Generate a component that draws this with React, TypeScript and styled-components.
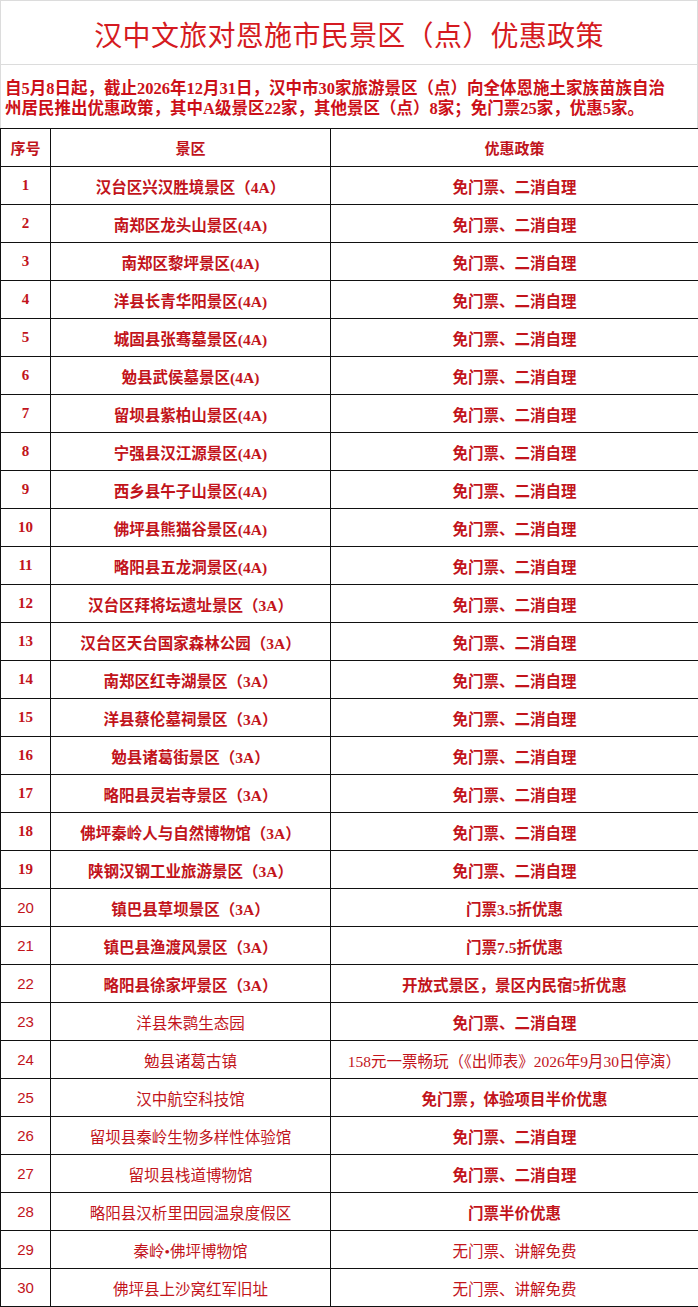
import React from 'react'
import styled, { createGlobalStyle } from 'styled-components'

const GlobalStyle = createGlobalStyle`
  html, body {
    margin: 0;
    padding: 0;
    background: #ffffff;
  }
  body {
    font-family: "Liberation Serif", "Noto Sans CJK SC", serif;
  }
`

const Page = styled.div`
  width: 698px;
  background: #fff;
`

const TitleBox = styled.div`
  height: 64px;
  border: 1px solid #dcdcdc;
  border-bottom: none;
  display: flex;
  align-items: center;
  justify-content: center;
  box-sizing: border-box;
`

const Title = styled.h1`
  margin: 0;
  font-size: 28px;
  font-weight: 400;
  color: #d51a21;
  letter-spacing: 0.3px;
  padding-top: 2px;
`

const Intro = styled.div`
  height: 64px;
  border: 1px solid #dcdcdc;
  border-bottom: none;
  box-sizing: border-box;
  padding: 14px 0 0 4px;
  font-size: 16.5px;
  line-height: 20px;
  font-weight: 700;
  color: #cc1018;
  white-space: nowrap;
`

const Table = styled.table`
  width: 698px;
  border-collapse: collapse;
  table-layout: fixed;
`

const Col = styled.col<{ w: number }>`
  width: ${(p) => p.w}px;
`

const Cell = styled.td<{ light?: boolean; num?: boolean }>`
  height: 37px;
  padding: 0;
  border: 1px solid #111;
  text-align: center;
  vertical-align: middle;
  color: #c2141b;
  font-size: ${(p) => (p.num ? '15px' : '15.5px')};
  font-weight: ${(p) => (p.light ? 400 : 700)};
  font-family: ${(p) =>
    p.num && p.light
      ? '"Liberation Sans", "Noto Sans CJK SC", sans-serif'
      : '"Liberation Serif", "Noto Sans CJK SC", serif'};
  white-space: nowrap;
`

const HeadCell = styled(Cell).attrs({ as: 'th' })`
  font-weight: 700;
  font-size: 15px;
  color: #c0141c;
`

type Row = { name: string; policy: string; light?: boolean; policyLight?: boolean }

const rows: Row[] = [
  { name: '汉台区兴汉胜境景区（4A）', policy: '免门票、二消自理' },
  { name: '南郑区龙头山景区(4A)', policy: '免门票、二消自理' },
  { name: '南郑区黎坪景区(4A)', policy: '免门票、二消自理' },
  { name: '洋县长青华阳景区(4A)', policy: '免门票、二消自理' },
  { name: '城固县张骞墓景区(4A)', policy: '免门票、二消自理' },
  { name: '勉县武侯墓景区(4A)', policy: '免门票、二消自理' },
  { name: '留坝县紫柏山景区(4A)', policy: '免门票、二消自理' },
  { name: '宁强县汉江源景区(4A)', policy: '免门票、二消自理' },
  { name: '西乡县午子山景区(4A)', policy: '免门票、二消自理' },
  { name: '佛坪县熊猫谷景区(4A)', policy: '免门票、二消自理' },
  { name: '略阳县五龙洞景区(4A)', policy: '免门票、二消自理' },
  { name: '汉台区拜将坛遗址景区（3A）', policy: '免门票、二消自理' },
  { name: '汉台区天台国家森林公园（3A）', policy: '免门票、二消自理' },
  { name: '南郑区红寺湖景区（3A）', policy: '免门票、二消自理' },
  { name: '洋县蔡伦墓祠景区（3A）', policy: '免门票、二消自理' },
  { name: '勉县诸葛街景区（3A）', policy: '免门票、二消自理' },
  { name: '略阳县灵岩寺景区（3A）', policy: '免门票、二消自理' },
  { name: '佛坪秦岭人与自然博物馆（3A）', policy: '免门票、二消自理' },
  { name: '陕钢汉钢工业旅游景区（3A）', policy: '免门票、二消自理' },
  { name: '镇巴县草坝景区（3A）', policy: '门票3.5折优惠' },
  { name: '镇巴县渔渡风景区（3A）', policy: '门票7.5折优惠' },
  { name: '略阳县徐家坪景区（3A）', policy: '开放式景区，景区内民宿5折优惠' },
  { name: '洋县朱鹮生态园', policy: '免门票、二消自理', light: true },
  { name: '勉县诸葛古镇', policy: '158元一票畅玩（《出师表》2026年9月30日停演）', light: true, policyLight: true },
  { name: '汉中航空科技馆', policy: '免门票，体验项目半价优惠', light: true },
  { name: '留坝县秦岭生物多样性体验馆', policy: '免门票、二消自理', light: true },
  { name: '留坝县栈道博物馆', policy: '免门票、二消自理', light: true },
  { name: '略阳县汉析里田园温泉度假区', policy: '门票半价优惠', light: true },
  { name: '秦岭•佛坪博物馆', policy: '无门票、讲解免费', light: true, policyLight: true },
  { name: '佛坪县上沙窝红军旧址', policy: '无门票、讲解免费', light: true, policyLight: true },
]

const App: React.FC = () => {
  return (
    <Page>
      <GlobalStyle />
      <TitleBox>
        <Title>汉中文旅对恩施市民景区（点）优惠政策</Title>
      </TitleBox>
      <Intro>
        自5月8日起，截止2026年12月31日，汉中市30家旅游景区（点）向全体恩施土家族苗族自治
        <br />
        州居民推出优惠政策，其中A级景区22家，其他景区（点）8家；免门票25家，优惠5家。
      </Intro>
      <Table>
        <colgroup>
          <Col w={50} />
          <Col w={280} />
          <Col w={368} />
        </colgroup>
        <thead>
          <tr>
            <HeadCell>序号</HeadCell>
            <HeadCell>景区</HeadCell>
            <HeadCell>优惠政策</HeadCell>
          </tr>
        </thead>
        <tbody>
          {rows.map((r, i) => (
            <tr key={i}>
              <Cell num light={i >= 19}>
                {i + 1}
              </Cell>
              <Cell light={r.light}>{r.name}</Cell>
              <Cell light={r.policyLight}>{r.policy}</Cell>
            </tr>
          ))}
        </tbody>
      </Table>
    </Page>
  )
}

export default App
